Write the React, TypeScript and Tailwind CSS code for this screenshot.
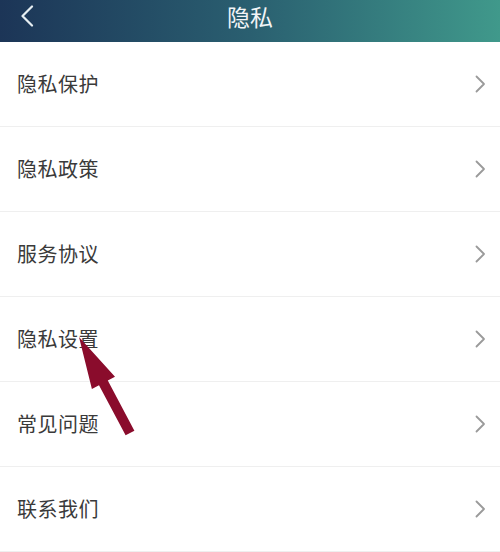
const items = ["隐私保护", "隐私政策", "服务协议", "隐私设置", "常见问题", "联系我们"];

function Chevron() {
  return (
    <svg width="12" height="20" viewBox="0 0 12 20" fill="none">
      <path d="M2.5 2.5l7.5 7.5-7.5 7.5" stroke="#9a9a9a" strokeWidth="1.8" strokeLinecap="round" strokeLinejoin="round" />
    </svg>
  );
}

export default function App() {
  return (
    <div
      className="relative w-[500px] h-[552px] overflow-hidden bg-white"
      style={{ fontFamily: '"Noto Sans CJK SC", "Noto Sans", sans-serif' }}
    >
      {/* Header */}
      <div className="relative h-[42px] flex items-center justify-center bg-gradient-to-r from-[#1c3557] via-[#2a5f70] to-[#40998b]">
        <button className="absolute left-[18px] top-[4px] w-[18px] h-[24px] flex items-center justify-center">
          <svg width="14" height="22" viewBox="0 0 14 22" fill="none">
            <path d="M12 1.5L2.5 11l9.5 9.5" stroke="#e6eef2" strokeWidth="2.2" strokeLinecap="round" strokeLinejoin="round" />
          </svg>
        </button>
        <span className="text-[#f2f5f7] text-[23px] leading-none -mt-[10px]">隐私</span>
      </div>

      {/* List */}
      <div className="flex flex-col">
        {items.map((label) => (
          <div
            key={label}
            className="h-[85px] flex items-center justify-between pl-[17px] pr-[14px] border-b border-[#efefef]"
          >
            <span className="text-[20px] text-[#3a3a3a] tracking-[0.5px]">{label}</span>
            <Chevron />
          </div>
        ))}
      </div>

      {/* Annotation arrow */}
      <svg className="absolute left-0 top-0 pointer-events-none" width="500" height="552">
        <polygon
          points="79,337 115,376.8 107.8,380.6 134.4,430.7 125.6,435.3 99,385.2 91.9,389"
          fill="#8a0c2c"
        />
      </svg>
    </div>
  );
}
